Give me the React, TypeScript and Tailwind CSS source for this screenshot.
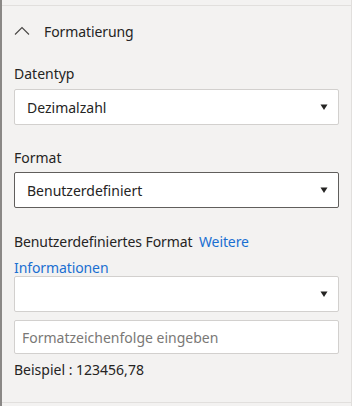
import React from "react";

const font = { fontFamily: "'Segoe UI', 'Noto Sans', sans-serif" };

const Caret = () => (
  <svg width="8" height="8" viewBox="0 0 8 8" className="shrink-0">
    <path d="M0.5 1.5 H7.5 L4 7 Z" fill="#252423" />
  </svg>
);

interface SelectBoxProps {
  value?: string;
  active?: boolean;
}

const SelectBox = ({ value, active }: SelectBoxProps) => (
  <div
    className={`h-9 bg-white rounded-[2px] border flex items-center justify-between pl-[12px] pr-[10px] ${
      active ? "border-[#605e5c]" : "border-[#d2d0ce]"
    }`}
  >
    <span className="text-[14px] text-[#252423]">{value}</span>
    <Caret />
  </div>
);

export default function App() {
  return (
    <div
      className="w-[352px] h-[406px] bg-[#f3f2f1] border-l-2 border-l-[#8a8886] border-r border-r-[#e1dfdd] overflow-hidden"
      style={font}
    >
      <div className="mt-[5px] border-t border-[#e1dfdd]" />
      <div className="pl-[12px] pr-[12px]">
        {/* section header */}
        <div className="flex items-center h-[52px] -mt-[1px]">
          <svg width="16" height="10" viewBox="0 0 16 10">
            <path d="M1 8.5 L8 1.5 L15 8.5" fill="none" stroke="#484644" strokeWidth="1.1" />
          </svg>
          <span className="ml-[14px] text-[14px] tracking-[-0.1px] text-[#252423]">Formatierung</span>
        </div>

        <div className="text-[14px] text-[#252423] leading-[20px] mt-[7px]">Datentyp</div>
        <div className="mt-[5px]">
          <SelectBox value="Dezimalzahl" />
        </div>

        <div className="text-[14px] text-[#252423] leading-[20px] mt-[23px]">Format</div>
        <div className="mt-[4px]">
          <SelectBox value="Benutzerdefiniert" active />
        </div>

        <div className="text-[14px] leading-[26px] mt-[21px] tracking-[-0.1px]">
          <div className="text-[#252423]">
            Benutzerdefiniertes Format{" "}
            <a className="text-[#1a6fd1] ml-[3px] cursor-pointer">Weitere</a>
          </div>
          <a className="block text-[#1a6fd1] cursor-pointer">Informationen</a>
        </div>
        <div className="-mt-[5px]">
          <SelectBox />
        </div>

        <div className="mt-[8px] h-[34px] bg-white rounded-[2px] border border-[#d2d0ce] flex items-center px-[7px]">
          <input
            className="w-full outline-none text-[14px] text-[#252423] placeholder:text-[#7a7876] bg-transparent"
            placeholder="Formatzeichenfolge eingeben"
            style={font}
          />
        </div>

        <div className="text-[14px] text-[#252423] leading-[20px] mt-[6px]">Beispiel : 123456,78</div>
      </div>
      <div className="mt-[22px] border-t border-[#e1dfdd]" />
    </div>
  );
}
